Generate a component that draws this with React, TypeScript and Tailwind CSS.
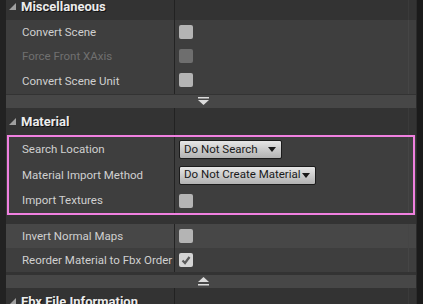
import React from 'react';

const ROW_BG = 'bg-[#3e3e3e]';

function Caret() {
  return (
    <svg width="7" height="7" viewBox="0 0 7 7" className="shrink-0">
      <polygon points="7,0 7,7 0,7" fill="#a0a0a0" />
    </svg>
  );
}

function Header({ title, className = '' }: { title: string; className?: string }) {
  return (
    <div className={`flex h-[27px] shrink-0 bg-[#333333] ${className}`}>
      <div className="flex w-[168px] items-center gap-[5px] pl-[3px]">
        <Caret />
        <span className="text-[13px] font-bold text-[#ececec] [text-shadow:1px_1px_0_#111]">{title}</span>
      </div>
      <div className="w-px bg-[#222222]" />
      <div className="flex-1" />
      <div className="w-px bg-[#3a3a3a]" />
      <div className="w-[7px]" />
    </div>
  );
}

function Checkbox({ disabled, checked }: { disabled?: boolean; checked?: boolean }) {
  if (checked) {
    return (
      <div className="flex h-[14px] w-[14px] items-center justify-center rounded-[2px] bg-[#d4d4d4]">
        <svg width="10" height="10" viewBox="0 0 10 10">
          <polyline points="1.5,5.5 4,8 8.5,2" fill="none" stroke="#5a5a5a" strokeWidth="2.2" />
        </svg>
      </div>
    );
  }
  return (
    <div
      className={`h-[14px] w-[14px] rounded-[2px] ${disabled ? 'bg-[#6e6e6e]' : 'bg-[#b4b4b4]'}`}
    />
  );
}

function Dropdown({ label, width }: { label: string; width: string }) {
  return (
    <div
      className={`flex h-[19px] ${width} items-center justify-between rounded-[2px] border border-[#1b1b1b] bg-gradient-to-b from-[#e6e6e6] to-[#b2b2b2] pl-[4px] pr-[5px]`}
    >
      <span className="text-[11.5px] text-[#1a1a1a]">{label}</span>
      <svg width="8" height="5" viewBox="0 0 8 5">
        <polygon points="0,0 8,0 4,5" fill="#1a1a1a" />
      </svg>
    </div>
  );
}

function Row({
  label,
  children,
  disabled,
  h = 'h-[24px]',
  bg = ROW_BG,
}: {
  label: string;
  children: React.ReactNode;
  disabled?: boolean;
  h?: string;
  bg?: string;
}) {
  return (
    <div className={`flex ${h} shrink-0 ${bg}`}>
      <div
        className={`flex w-[168px] items-center pl-[16px] pt-px text-[11.5px] ${disabled ? 'text-[#707070]' : 'text-[#d0d0d0]'}`}
      >
        {label}
      </div>
      <div className="w-px bg-[#232323]" />
      <div className="flex flex-1 items-center pl-[4px]">{children}</div>
      <div className="w-px bg-[#454545]" />
      <div className="w-[7px]" />
    </div>
  );
}

function ExpandBar({ up }: { up?: boolean }) {
  return (
    <div className="flex h-[13px] shrink-0 items-center bg-[#474747] pl-[192px]">
      <svg width="11" height="9" viewBox="0 0 11 9">
        {up ? (
          <>
            <polygon points="5.5,0 11,5 0,5" fill="#dcdcdc" />
            <rect x="0" y="7" width="11" height="1.5" fill="#dcdcdc" />
          </>
        ) : (
          <>
            <rect x="0" y="0" width="11" height="1.5" fill="#dcdcdc" />
            <polygon points="0,3 11,3 5.5,8" fill="#dcdcdc" />
          </>
        )}
      </svg>
    </div>
  );
}

export default function App() {
  return (
    <div className="flex h-[304px] w-[423px] overflow-hidden bg-[#1f1f1f] font-['Roboto',sans-serif]">
      <div className="w-[6px] shrink-0 bg-[#222222]" />
      <div className="flex w-[410px] shrink-0 flex-col">
        <Header title="Miscellaneous" className="-mt-[7px]" />
        <Row label="Convert Scene">
          <Checkbox />
        </Row>
        <Row label="Force Front XAxis" disabled>
          <Checkbox disabled />
        </Row>
        <Row label="Convert Scene Unit" h="h-[26px]">
          <div className="-mt-[2px]">
            <Checkbox />
          </div>
        </Row>
        <div className="h-px shrink-0 bg-[#333333]" />
        <ExpandBar />
        <Header title="Material" />
        <div className="relative flex shrink-0 flex-col bg-[#3e3e3e] py-[2px]">
          <Row label="Search Location" h="h-[25px]">
            <Dropdown label="Do Not Search" width="w-[103px]" />
          </Row>
          <Row label="Material Import Method" h="h-[26px]">
            <Dropdown label="Do Not Create Material" width="w-[137px]" />
          </Row>
          <Row label="Import Textures" h="h-[25px]">
            <Checkbox />
          </Row>
          <div className="pointer-events-none absolute inset-y-0 left-px right-px border-2 border-[#f080e0]" />
        </div>
        <div className="h-[9px] shrink-0 bg-[#333333]" />
        <Row label="Invert Normal Maps" bg="bg-[#474747]">
          <Checkbox />
        </Row>
        <Row label="Reorder Material to Fbx Order">
          <Checkbox checked />
        </Row>
        <div className="h-[3px] shrink-0 bg-[#333333]" />
        <ExpandBar up />
        <Header title="Fbx File Information" />
      </div>
      <div className="flex flex-1">
        <div className="w-px bg-[#2c2c2c]" />
        <div className="flex-1 bg-[#1b1b1b]" />
      </div>
    </div>
  );
}
